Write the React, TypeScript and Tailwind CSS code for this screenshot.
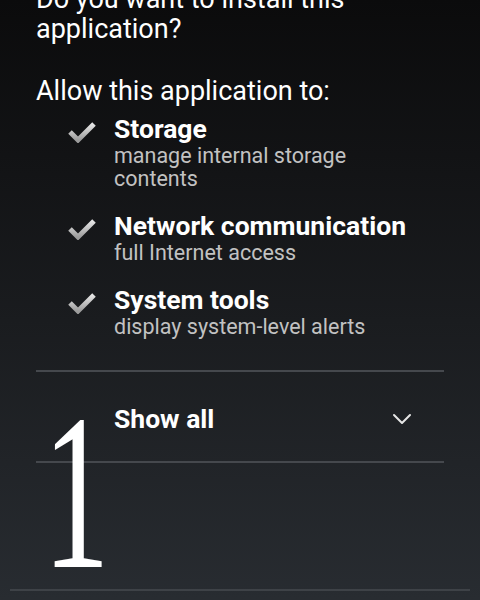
import React from 'react';
import { ChevronDown } from 'lucide-react';

const permissions = [
  { title: 'Storage', desc: 'manage internal storage contents' },
  { title: 'Network communication', desc: 'full Internet access' },
  { title: 'System tools', desc: 'display system-level alerts' },
];

const Check: React.FC<{ id: string }> = ({ id }) => (
  <svg width="28" height="22" viewBox="0 0 28 22">
    <defs>
      <linearGradient id={id} x1="0" y1="0" x2="0" y2="1">
        <stop offset="0" stopColor="#e6e6e6" />
        <stop offset="1" stopColor="#9c9c9c" />
      </linearGradient>
    </defs>
    <path d="M2 11 L10 19 L26 3" fill="none" stroke={`url(#${id})`} strokeWidth="5" />
  </svg>
);

const App: React.FC = () => {
  return (
    <div className="relative h-[600px] w-[480px] overflow-hidden bg-linear-to-b from-[#0b0b0c] to-[#282c31] font-['Roboto',sans-serif] text-white">
      <div className="px-[36px]">
        {/* Dialog heading */}
        <h1 className="-mt-[16px] text-[27px] leading-[30px] font-normal">
          Do you want to install this application?
        </h1>
        <p className="mt-[32px] text-[27px] leading-[30px]">Allow this application to:</p>

        {/* Permission list */}
        <ul className="mt-[8px] flex flex-col gap-[21px]">
          {permissions.map((p, i) => (
            <li key={p.title} className="flex">
              <div className="w-[78px] shrink-0 pl-[32px] pt-[7px]">
                <Check id={`ck${i}`} />
              </div>
              <div className="w-[306px]">
                <div className="text-[26.5px] leading-[30px] font-bold">{p.title}</div>
                <div className="text-[21.5px] leading-[23px] text-[#c2c2c2]">{p.desc}</div>
              </div>
            </li>
          ))}
        </ul>

        <div className="mt-[32px] h-[2px] bg-[#45484d]" />
        <div className="flex h-[89px] items-center pl-[78px] pt-[4px]">
          <span className="text-[26.5px] font-bold">Show all</span>
          <ChevronDown size={32} strokeWidth={1.5} className="ml-auto mr-[26px] text-[#e6e6e6]" />
        </div>
        <div className="h-[2px] bg-[#45484d]" />
      </div>

      <div className="mx-[10px] mt-[126px] h-[2px] bg-[#3e4247]" />

      {/* step marker */}
      <div className="absolute left-[43px] top-[381px] origin-left [transform:scaleX(0.6)] font-['Liberation_Serif',serif] text-[222px] leading-none text-white">
        1
      </div>
    </div>
  );
};

export default App;
